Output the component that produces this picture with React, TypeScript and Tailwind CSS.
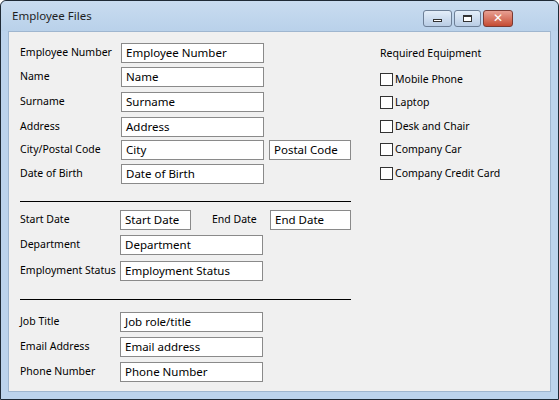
import React from 'react';

const font = { fontFamily: '"Noto Sans", "DejaVu Sans", sans-serif' };

function Field({ label, value, w = 'w-[143px]', ml = 'ml-[1px]' }: { label: string; value: string; w?: string; ml?: string }) {
  return (
    <div className="flex items-center h-5">
      <span className="w-[100px] shrink-0 text-[10.5px] leading-none whitespace-nowrap -mt-[2px]">{label}</span>
      <div className={`${w} ${ml} h-5 border border-[#8a8a8a] bg-white px-[4px] flex items-center text-[11.5px] leading-none`}>
        {value}
      </div>
    </div>
  );
}

function Box({ value, w }: { value: string; w: string }) {
  return (
    <div className={`${w} h-5 border border-[#8a8a8a] bg-white px-[4px] flex items-center text-[11.5px] leading-none`}>
      {value}
    </div>
  );
}

function Check({ label }: { label: string }) {
  return (
    <div className="flex items-center h-[14px]">
      <div className="w-[13px] h-[13px] border border-[#333] bg-white" />
      <span className="ml-[2px] text-[10.5px] leading-none">{label}</span>
    </div>
  );
}

export default function App() {
  return (
    <div className="w-[559px] h-[400px] bg-white text-black" style={font}>
      <div className="w-full h-full border border-[#1f2a36] rounded-t-[6px] bg-[#bcd3ec] flex flex-col">
        {/* Title bar */}
        <div className="h-[30px] shrink-0 flex items-center px-[11px] bg-gradient-to-b from-[#c9dcf0] to-[#b9d1ea] rounded-t-[6px]">
          <span className="text-[11.5px] text-[#1e1e1e]">Employee Files</span>
          <div className="ml-auto flex gap-[2px] mt-[4px] mr-[34px]">
            <div className="w-[29px] h-[17px] rounded-[3px] border border-[#6d7f96] bg-gradient-to-b from-[#e4eef9] to-[#b9cde5] flex items-center justify-center">
              <div className="w-[9px] h-[3px] border border-[#333] bg-white mt-[5px]" />
            </div>
            <div className="w-[27px] h-[17px] rounded-[3px] border border-[#6d7f96] bg-gradient-to-b from-[#e4eef9] to-[#b9cde5] flex items-center justify-center">
              <div className="w-[9px] h-[7px] border border-[#333] border-t-2 bg-white" />
            </div>
            <div className="w-[30px] h-[17px] rounded-[3px] border border-[#7a3a33] bg-gradient-to-b from-[#e8a093] to-[#c44a32] flex items-center justify-center">
              <span className="text-white text-[12px] font-bold leading-none">✕</span>
            </div>
          </div>
        </div>
        {/* Client area */}
        <div className="flex-1 mx-[7px] mb-[7px] bg-[#f0f0f0] border border-[#9fb6cf] flex pl-[11px] pt-[11px]">
          <div className="w-[331px] flex flex-col">
            <Field label="Employee Number" value="Employee Number" />
            <div className="mt-1"><Field label="Name" value="Name" /></div>
            <div className="mt-[5px]"><Field label="Surname" value="Surname" /></div>
            <div className="mt-[5px]"><Field label="Address" value="Address" /></div>
            <div className="mt-[3px] flex items-center h-5">
              <span className="w-[100px] shrink-0 text-[10.5px] leading-none whitespace-nowrap -mt-[2px]">City/Postal Code</span>
              <div className="ml-[1px]"><Box value="City" w="w-[143px]" /></div>
              <div className="ml-[5px]"><Box value="Postal Code" w="w-[82px]" /></div>
            </div>
            <div className="mt-1"><Field label="Date of Birth" value="Date of Birth" /></div>
            <div className="mt-[17px] h-px bg-black" />
            <div className="mt-[8px] flex items-center h-5">
              <span className="w-[100px] shrink-0 text-[10.5px] leading-none -mt-[2px]">Start Date</span>
              <Box value="Start Date" w="w-[71px]" />
              <span className="ml-[21px] w-[58px] text-[10.5px] leading-none -mt-[2px]">End Date</span>
              <Box value="End Date" w="w-[81px]" />
            </div>
            <div className="mt-[5px]"><Field label="Department" value="Department" ml="ml-0" /></div>
            <div className="mt-[6px]"><Field label="Employment Status" value="Employment Status" ml="ml-0" /></div>
            <div className="mt-[18px] h-px bg-black" />
            <div className="mt-[12px]"><Field label="Job Title" value="Job role/title" ml="ml-0" /></div>
            <div className="mt-[5px]"><Field label="Email Address" value="Email address" ml="ml-0" /></div>
            <div className="mt-[5px]"><Field label="Phone Number" value="Phone Number" ml="ml-0" /></div>
          </div>
          <div className="ml-[29px] flex flex-col pt-[3px]">
            <span className="text-[10.5px] leading-none h-[14px] flex items-center">Required Equipment</span>
            <div className="mt-[12px] flex flex-col gap-[9.5px]">
              <Check label="Mobile Phone" />
              <Check label="Laptop" />
              <Check label="Desk and Chair" />
              <Check label="Company Car" />
              <Check label="Company Credit Card" />
            </div>
          </div>
        </div>
      </div>
    </div>
  );
}
